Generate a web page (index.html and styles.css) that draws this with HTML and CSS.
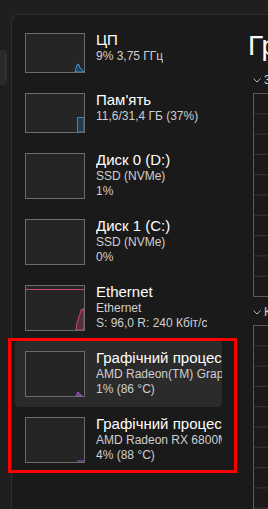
FILE: index.html
```html
<!DOCTYPE html>
<html lang="uk">
<head>
    <meta charset="UTF-8">
    <meta name="viewport" content="width=device-width, initial-scale=1.0">
    <title>Диспетчер завдань</title>
    <link rel="stylesheet" href="styles.css">
</head>
<body>
<div class="app">
    <nav class="nav">
        <div class="nav-item"><span class="nav-mark"></span></div>
    </nav>
    <main class="content">
        <div class="list">
            <div class="item">
                <div class="thumb">
                    <svg viewBox="0 0 58 38" preserveAspectRatio="none">
                        <path d="M49 38 L51 31 L52.5 30 L54 34 L55.5 35 L57 37 L58 38 Z" fill="rgba(40,140,215,0.25)" stroke="#3a9bdc" stroke-width="1"/>
                    </svg>
                </div>
                <div class="info">
                    <div class="name">ЦП</div>
                    <div class="sub">9% 3,75 ГГц</div>
                </div>
            </div>
            <div class="item">
                <div class="thumb">
                    <svg viewBox="0 0 58 38" preserveAspectRatio="none">
                        <path d="M51.5 38 L51.5 23.5 L58 23.5 L58 38 Z" fill="rgba(30,120,190,0.3)" stroke="#2a8bd0" stroke-width="1"/>
                    </svg>
                </div>
                <div class="info">
                    <div class="name">Пам'ять</div>
                    <div class="sub">11,6/31,4 ГБ (37%)</div>
                </div>
            </div>
            <div class="item">
                <div class="thumb tall"></div>
                <div class="info">
                    <div class="name">Диск 0 (D:)</div>
                    <div class="sub">SSD (NVMe)</div>
                    <div class="sub">1%</div>
                </div>
            </div>
            <div class="item">
                <div class="thumb tall"></div>
                <div class="info">
                    <div class="name">Диск 1 (C:)</div>
                    <div class="sub">SSD (NVMe)</div>
                    <div class="sub">0%</div>
                </div>
            </div>
            <div class="item">
                <div class="thumb tall">
                    <svg viewBox="0 0 58 44" preserveAspectRatio="none">
                        <path d="M0 3.5 H58" stroke="#c8457f" stroke-width="1"/>
                        <path d="M50 44 L51 36 L52 35 L53 30 L54 28 L55 24 L56 23 L57 25 L58 22 V44 Z" fill="rgba(200,69,127,0.3)" stroke="#c8457f" stroke-width="1"/>
                    </svg>
                </div>
                <div class="info">
                    <div class="name">Ethernet</div>
                    <div class="sub">Ethernet</div>
                    <div class="sub">S: 96,0 R: 240 Кбіт/с</div>
                </div>
            </div>
            <div class="item selected">
                <div class="thumb tall">
                    <svg viewBox="0 0 58 44" preserveAspectRatio="none">
                        <path d="M50 44 L52 40 L53 41 L54 42 L56 44 Z" fill="rgba(168,80,216,0.5)" stroke="#a850d8" stroke-width="1"/>
                    </svg>
                </div>
                <div class="info">
                    <div class="name">Графічний процесор 0</div>
                    <div class="sub">AMD Radeon(TM) Graphics</div>
                    <div class="sub">1% (86 °C)</div>
                </div>
            </div>
            <div class="item">
                <div class="thumb tall">
                    <svg viewBox="0 0 58 44" preserveAspectRatio="none">
                        <path d="M51 43 H58" stroke="#a850d8" stroke-width="1.2"/>
                    </svg>
                </div>
                <div class="info">
                    <div class="name">Графічний процесор 1</div>
                    <div class="sub">AMD Radeon RX 6800M</div>
                    <div class="sub">4% (88 °C)</div>
                </div>
            </div>
        </div>
        <section class="detail">
            <h1>Графічний процесор 0</h1>
            <div class="chart-head">
                <svg class="chevron" viewBox="0 0 8 5"><path d="M0.5 0.5 L4 4 L7.5 0.5" fill="none" stroke="#b5b5b5" stroke-width="1"/></svg>
                <span>3D</span>
            </div>
            <div class="chart"></div>
            <div class="chart-head">
                <svg class="chevron" viewBox="0 0 8 5"><path d="M0.5 0.5 L4 4 L7.5 0.5" fill="none" stroke="#b5b5b5" stroke-width="1"/></svg>
                <span>Копіювання</span>
            </div>
            <div class="chart"></div>
        </section>
    </main>
</div>
<div class="callout"></div>
</body>
</html>
```

FILE: styles.css
```css
* {
    box-sizing: border-box;
}

body {
    margin: 0;
    width: 268px;
    height: 509px;
    overflow: hidden;
    position: relative;
    font-family: 'Liberation Sans', Arial, sans-serif;
    color: #fff;
    background-color: #1f1f1f;
}

.app {
    display: flex;
    height: 100%;
}

.nav {
    width: 11px;
    flex: none;
    padding-top: 50px;
}

.nav-item {
    width: 7px;
    height: 35px;
    padding: 5px 0 0 5px;
    background-color: #2a2a2a;
    border-radius: 0 4px 4px 0;
}

.nav-mark {
    display: block;
    width: 1px;
    height: 25px;
    background-color: #3c3c3c;
}

.content {
    flex: 1;
    min-width: 0;
    display: flex;
    margin-top: 14px;
    background-color: #1a1a1a;
    border-top: 1px solid #2e2e2e;
    border-left: 1px solid #2e2e2e;
    border-top-left-radius: 8px;
    overflow: hidden;
}

.list {
    width: 210px;
    flex: none;
    padding: 8px 0 0 3px;
}

.item {
    display: flex;
    gap: 11px;
    padding: 10px 0 10px 10px;
    border-radius: 4px;
}

.item.selected {
    background-color: #2b2b2b;
}

.thumb {
    width: 60px;
    height: 40px;
    flex: none;
    border: 1px solid #6b6b6b;
    background-color: #252525;
}

.thumb.tall {
    height: 46px;
}

.thumb svg {
    display: block;
    width: 100%;
    height: 100%;
}

.info {
    min-width: 0;
    overflow: hidden;
    white-space: nowrap;
    margin-top: -3px;
}

.name {
    font-size: 15px;
    line-height: 19px;
}

.sub {
    font-size: 12px;
    line-height: 15px;
    color: #cfcfcf;
}

.detail {
    flex: 1;
    min-width: 0;
    padding: 14px 0 0 26px;
    white-space: nowrap;
    overflow: hidden;
}

h1 {
    margin: 0 0 9px;
    font-size: 28px;
    line-height: 34px;
    font-weight: 400;
}

.chart-head {
    display: flex;
    align-items: center;
    gap: 3px;
    height: 16px;
    margin: 0 0 5px 5px;
    font-size: 12px;
    color: #d0d0d0;
}

.chevron {
    width: 8px;
    height: 5px;
    flex: none;
}

.chart {
    width: 400px;
    height: 204px;
    margin-left: 5px;
    border: 1px solid #5a5a5a;
    background-image: linear-gradient(to bottom, transparent 19px, #363636 19px, #363636 20px, transparent 20px);
    background-size: 100% 20.3px;
}

.chart + .chart-head {
    margin-top: 7px;
}

.callout {
    position: absolute;
    left: 8px;
    top: 338px;
    width: 229px;
    height: 135px;
    border: 3px solid #ff0000;
    pointer-events: none;
}
```
